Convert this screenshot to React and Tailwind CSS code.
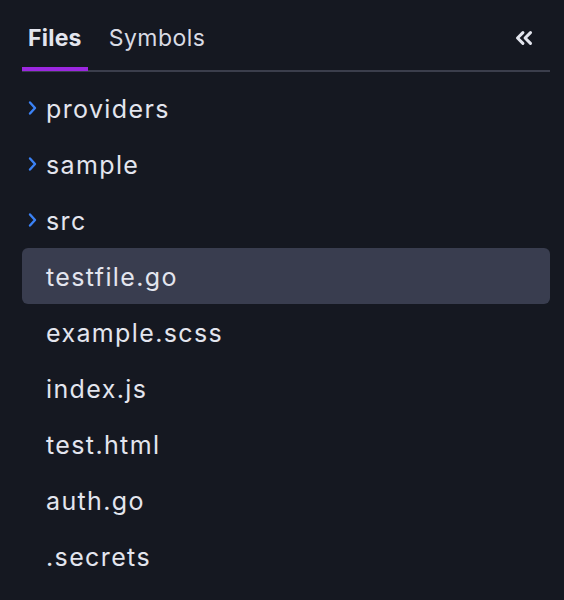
import { ChevronsLeft } from 'lucide-react';

const Chevron = () => (
  <svg width="10" height="16" viewBox="0 0 10 16" fill="none" className="text-[#3b82f6]">
    <polyline points="3,2.5 8,8 3,13.5" stroke="currentColor" strokeWidth="2.4" strokeLinecap="round" strokeLinejoin="round" />
  </svg>
);

const App = () => {
  const items = [
    { name: 'providers', folder: true },
    { name: 'sample', folder: true },
    { name: 'src', folder: true },
    { name: 'testfile.go', selected: true },
    { name: 'example.scss' },
    { name: 'index.js' },
    { name: 'test.html' },
    { name: 'auth.go' },
    { name: '.secrets' },
  ];

  return (
    <div className="w-[564px] h-[600px] bg-[#151821] pl-[22px] pr-[14px] text-[#e3e5ee] font-['Inter',sans-serif] overflow-hidden">
      {/* Tabs */}
      <div className="relative h-[72px] flex items-end">
        <div className="absolute left-0 right-0 bottom-0 h-[2px] bg-[#3b3e4c]" />
        <div className="relative flex items-end h-full">
          <div className="relative h-full flex items-center px-[6px] pt-[4px]">
            <span className="text-[23px] font-bold tracking-[0.01em]">Files</span>
            <div className="absolute left-0 right-0 bottom-[1px] h-[4px] bg-[#9b27e0]" />
          </div>
          <div className="h-full flex items-center px-[6px] pt-[4px] ml-[15px]">
            <span className="text-[23px] font-normal tracking-[0.02em] text-[#d9dbe4]">Symbols</span>
          </div>
        </div>
        <div className="ml-auto h-full flex items-center pt-[4px] pr-[13px]">
          <ChevronsLeft size={26} strokeWidth={2.8} className="text-[#e3e5ee]" />
        </div>
      </div>

      {/* Tree */}
      <div className="mt-[8px] flex flex-col">
        {items.map((item) => (
          <div
            key={item.name}
            className={`h-[56px] flex items-center rounded-[6px] ${item.selected ? 'bg-[#393d4f]' : ''}`}
          >
            <div className="w-[24px] flex items-center pl-[5px]">
              {item.folder && <Chevron />}
            </div>
            <span className="text-[25px] leading-none tracking-[0.055em] pt-[2px]">{item.name}</span>
          </div>
        ))}
      </div>
    </div>
  );
};

export default App;
